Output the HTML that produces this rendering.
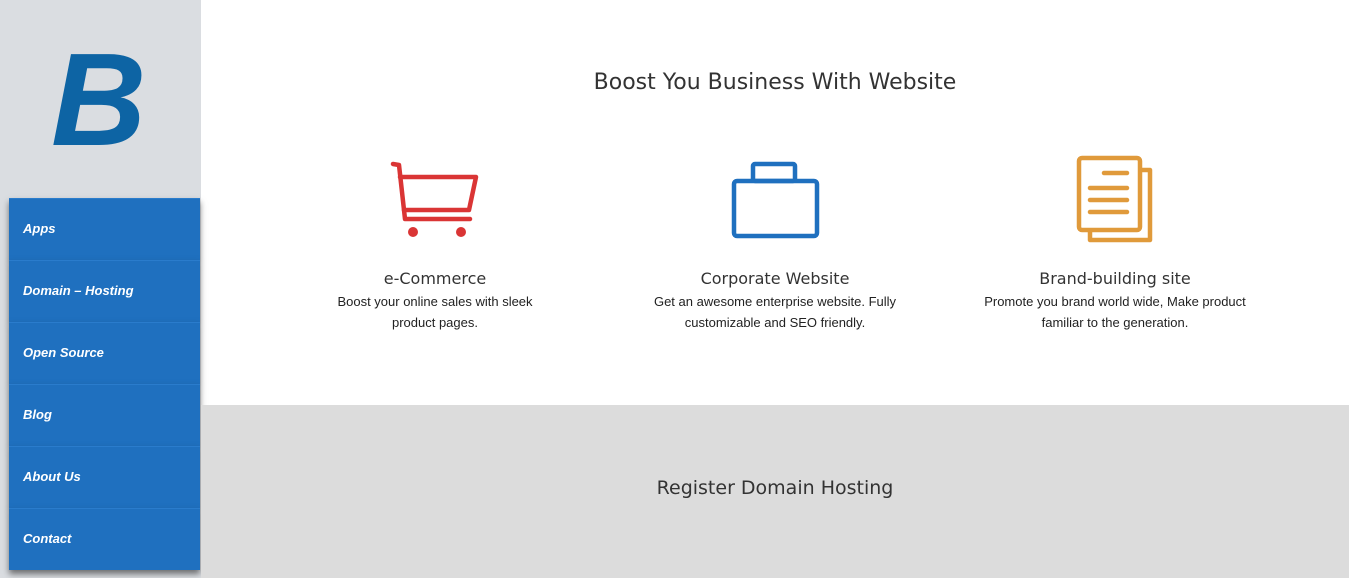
<!DOCTYPE html>
<html><head><meta charset="utf-8"><style>
*{margin:0;padding:0;box-sizing:border-box}
body{width:1349px;height:578px;overflow:hidden;background:#fff;font-family:"Liberation Sans",sans-serif;position:relative}
.side{position:absolute;left:0;top:0;width:201px;height:578px;background:#dadde1}
.logo{position:absolute;left:51px;top:34px;font:italic bold 132px/1 "Liberation Sans",sans-serif;color:#0d64a4;letter-spacing:0}
.menu{position:absolute;left:9px;top:198px;width:191px}
.menu div{height:62px;background:#1f70bf;color:#fff;font-weight:bold;font-style:italic;font-size:13px;line-height:60px;padding-left:14px;box-shadow:0 4px 6px rgba(0,0,0,.5);position:relative;border-top:1px solid #2a7ccc}
.h{position:absolute;font-family:"DejaVu Sans",sans-serif;color:#333;text-align:center;font-weight:normal}
.col{position:absolute;top:268px;width:320px;text-align:center}
.col h3{font-family:"DejaVu Sans",sans-serif;font-weight:normal;font-size:16px;color:#333;line-height:22px}
.col p{font-size:13px;color:#222;line-height:21px;margin-top:1px}
.bot{position:absolute;left:201px;top:405px;width:1148px;height:173px;background:#dcdcdc}
</style></head><body>
<div class="side">
<div class="logo">B</div>
<div class="menu">
<div>Apps</div><div>Domain – Hosting</div><div>Open Source</div><div>Blog</div><div>About Us</div><div>Contact</div>
</div>
</div>
<div class="h" style="left:201px;width:1148px;top:70px;font-size:22px">Boost You Business With Website</div>
<svg width="1349" height="260" style="position:absolute;left:0;top:0">
<g fill="none" stroke="#da3535" stroke-width="4.5" stroke-linecap="round" stroke-linejoin="round">
<path d="M393 164 L399 165 L405 219 L470 219"/>
<path d="M400 177 L476 177 L469 210 L404 210"/>
</g>
<circle cx="413" cy="232" r="5" fill="#da3535"/><circle cx="461" cy="232" r="5" fill="#da3535"/>
<g fill="none" stroke="#1f70bf" stroke-width="4.5" stroke-linejoin="round">
<rect x="753" y="164" width="42" height="17" rx="2"/>
<rect x="734" y="181" width="83" height="55" rx="3"/>
</g>
<g fill="none" stroke="#e09a3b" stroke-width="4.5" stroke-linejoin="round" stroke-linecap="round">
<path d="M1140 170 L1150 170 L1150 240 L1090 240 L1090 230"/>
<rect x="1079" y="158" width="61" height="72" rx="3" fill="#fff"/>
<path d="M1104 173 L1127 173 M1090 188 L1127 188 M1090 200 L1127 200 M1090 212 L1127 212"/>
</g>
</svg>
<div class="col" style="left:275px"><h3>e-Commerce</h3><p>Boost your online sales with sleek<br>product pages.</p></div>
<div class="col" style="left:615px"><h3>Corporate Website</h3><p>Get an awesome enterprise website. Fully<br>customizable and SEO friendly.</p></div>
<div class="col" style="left:955px"><h3>Brand-building site</h3><p>Promote you brand world wide, Make product<br>familiar to the generation.</p></div>
<div class="bot"><div class="h" style="left:0;width:1148px;top:72px;font-size:19px">Register Domain Hosting</div></div>
</body></html>
